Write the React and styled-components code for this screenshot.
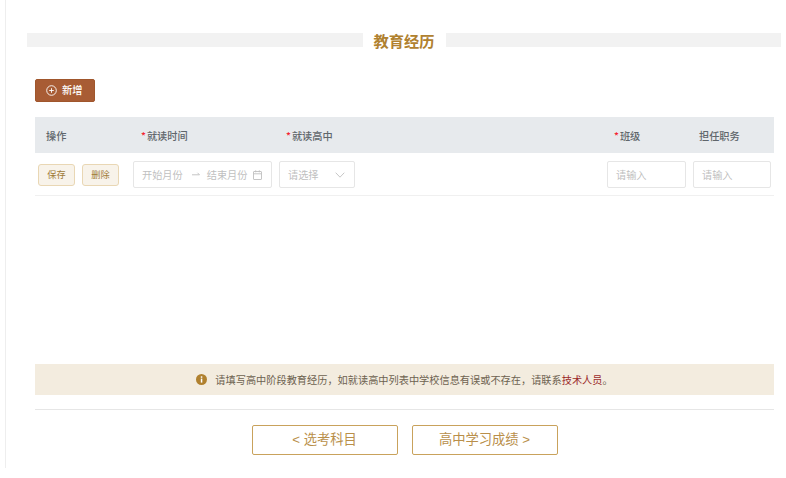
import styled, { createGlobalStyle } from "styled-components";

const GlobalStyle = createGlobalStyle`
  html, body {
    margin: 0;
    padding: 0;
    background: #fff;
    font-family: "Noto Sans CJK SC", "Liberation Sans", sans-serif;
  }
`;

const COLUMNS = "95px 146px 327px 86px 85px";

const Page = styled.div`
  width: 786px;
  height: 478px;
  padding-left: 5px;
  box-sizing: border-box;
  overflow: hidden;
`;

const Panel = styled.main`
  height: 468px;
  box-sizing: border-box;
  border-left: 1px solid #eeeeee;
  padding-top: 31px;
  display: flex;
  flex-direction: column;
`;

const TitleRow = styled.div`
  display: flex;
  align-items: center;
  gap: 11px;
  margin: 0 5px 0 21px;
  height: 18px;
`;

const TitleBar = styled.div`
  flex: 1;
  height: 14px;
  background: #f2f2f2;
`;

const Title = styled.h2`
  margin: 0;
  font-size: 15.25px;
  line-height: 18px;
  font-weight: 700;
  color: #b0812f;
`;

const Content = styled.div`
  margin: 0 12px 0 29px;
  flex: 1;
  display: flex;
  flex-direction: column;
`;

const AddButton = styled.button`
  margin-top: 30px;
  width: 60px;
  height: 23px;
  padding: 0 0 0 10px;
  display: flex;
  align-items: center;
  gap: 5px;
  box-sizing: border-box;
  border: 1px solid #a0562c;
  border-radius: 2px;
  background: #a85c34;
  color: #fff;
  font: 500 10.2px/1 "Noto Sans CJK SC", sans-serif;
`;

const HeadRow = styled.div`
  margin-top: 15px;
  display: grid;
  grid-template-columns: ${COLUMNS};
  height: 36px;
  align-items: center;
  background: #e7eaed;
`;

const HeadCell = styled.div`
  padding-left: ${(p) => p.$pad ?? 10}px;
  font-size: 10.2px;
  font-weight: 500;
  color: #60666b;
  white-space: nowrap;
`;

const Star = styled.span`
  color: #f5222d;
  margin-right: 1px;
`;

const BodyRow = styled.div`
  display: grid;
  grid-template-columns: ${COLUMNS};
  height: 43px;
  align-items: center;
  box-sizing: border-box;
  border-bottom: 1px solid #f0f0f0;
`;

const Actions = styled.div`
  display: flex;
  gap: 7px;
  padding: 2px 0 0 3px;
`;

const SmallButton = styled.button`
  width: 37px;
  height: 22px;
  padding: 0;
  box-sizing: border-box;
  border: 1px solid #e9d7b4;
  border-radius: 3px;
  background: #f8f3ea;
  color: #a07c38;
  font: 400 9.2px/1 "Noto Sans CJK SC", sans-serif;
`;

const Field = styled.div`
  box-sizing: border-box;
  height: 27px;
  width: ${(p) => p.$width}px;
  margin: 1px 0 0 ${(p) => p.$left ?? 3}px;
  display: flex;
  align-items: center;
  border: 1px solid #e6e6e6;
  border-radius: 2px;
  background: #fff;
  color: #bfbfbf;
  font-size: 10.2px;
  white-space: nowrap;
`;

const RangeField = styled(Field)`
  padding-left: 8px;
`;

const SelectField = styled(Field)`
  padding: 0 9px 0 8px;
  justify-content: space-between;
`;

const InputField = styled(Field)`
  padding-left: 8px;
`;

const Spacer = styled.div`
  flex: 1;
`;

const Notice = styled.div`
  height: 31px;
  display: flex;
  align-items: center;
  justify-content: center;
  gap: 8px;
  background: #f3ecdf;
  color: #6d6250;
  font-size: 10.2px;
`;

const NoticeLink = styled.span`
  color: #9c2b2b;
`;

const Footer = styled.div`
  margin-top: 14px;
  height: 59px;
  box-sizing: border-box;
  border-top: 1px solid #e6e6e6;
  padding-top: 15px;
  display: flex;
  justify-content: center;
  gap: 14px;
`;

const NavButton = styled.button`
  width: 146px;
  height: 30px;
  padding: 0;
  box-sizing: border-box;
  border: 1px solid #c9a25c;
  border-radius: 2px;
  background: #fff;
  color: #b98f4a;
  font: 400 13.3px/1 "Liberation Sans", "Noto Sans CJK SC", sans-serif;
`;

const ArrowSvg = styled.svg`
  margin: 0 7px 0 9px;
`;

const CalendarSvg = styled.svg`
  margin-left: 5px;
`;

const PlusIcon = () => (
  <svg width="11" height="11" viewBox="0 0 11 11" fill="none" stroke="#fff" strokeWidth="0.9">
    <circle cx="5.5" cy="5.5" r="4.8" />
    <path d="M3.2 5.5h4.6M5.5 3.2v4.6" />
  </svg>
);

const CalendarIcon = () => (
  <CalendarSvg width="9" height="10" viewBox="0 0 9 10" fill="none" stroke="#bfbfbf" strokeWidth="0.9">
    <rect x="0.5" y="1.5" width="8" height="8" rx="0.5" />
    <path d="M0.5 3.8h8M2.7 0.3v2M6.3 0.3v2" />
  </CalendarSvg>
);

const ArrowIcon = () => (
  <ArrowSvg width="8" height="7" viewBox="0 0 8 7" fill="none" stroke="#bfbfbf" strokeWidth="0.9">
    <path d="M0 3.8h7.5M5.5 1.8 7.5 3.8" />
  </ArrowSvg>
);

const ChevronIcon = () => (
  <svg width="10" height="6" viewBox="0 0 10 6" fill="none" stroke="#bfbfbf" strokeWidth="0.9">
    <path d="M0.7 0.7 5 5.2 9.3 0.7" />
  </svg>
);

const InfoIcon = () => (
  <svg width="11" height="11" viewBox="0 0 11 11">
    <circle cx="5.5" cy="5.5" r="5.5" fill="#b0812f" />
    <rect x="4.8" y="4.6" width="1.5" height="4" fill="#fff" />
    <rect x="4.8" y="2.3" width="1.5" height="1.5" fill="#fff" />
  </svg>
);

export default function App() {
  return (
    <Page>
      <GlobalStyle />
      <Panel>
        <TitleRow>
          <TitleBar />
          <Title>教育经历</Title>
          <TitleBar />
        </TitleRow>
        <Content>
          <AddButton type="button">
            <PlusIcon />
            新增
          </AddButton>
          <HeadRow>
            <HeadCell $pad={11}>操作</HeadCell>
            <HeadCell $pad={11}><Star>*</Star>就读时间</HeadCell>
            <HeadCell><Star>*</Star>就读高中</HeadCell>
            <HeadCell $pad={11}><Star>*</Star>班级</HeadCell>
            <HeadCell>担任职务</HeadCell>
          </HeadRow>
          <BodyRow>
            <Actions>
              <SmallButton type="button">保存</SmallButton>
              <SmallButton type="button">删除</SmallButton>
            </Actions>
            <RangeField $width={139}>
              开始月份
              <ArrowIcon />
              结束月份
              <CalendarIcon />
            </RangeField>
            <SelectField $width={76}>
              请选择
              <ChevronIcon />
            </SelectField>
            <InputField $width={79} $left={4}>请输入</InputField>
            <InputField $width={78} $left={4}>请输入</InputField>
          </BodyRow>
          <Spacer />
          <Notice>
            <InfoIcon />
            <span>
              请填写高中阶段教育经历，如就读高中列表中学校信息有误或不存在，请联系
              <NoticeLink>技术人员</NoticeLink>。
            </span>
          </Notice>
          <Footer>
            <NavButton type="button">&lt; 选考科目</NavButton>
            <NavButton type="button">高中学习成绩 &gt;</NavButton>
          </Footer>
        </Content>
      </Panel>
    </Page>
  );
}
